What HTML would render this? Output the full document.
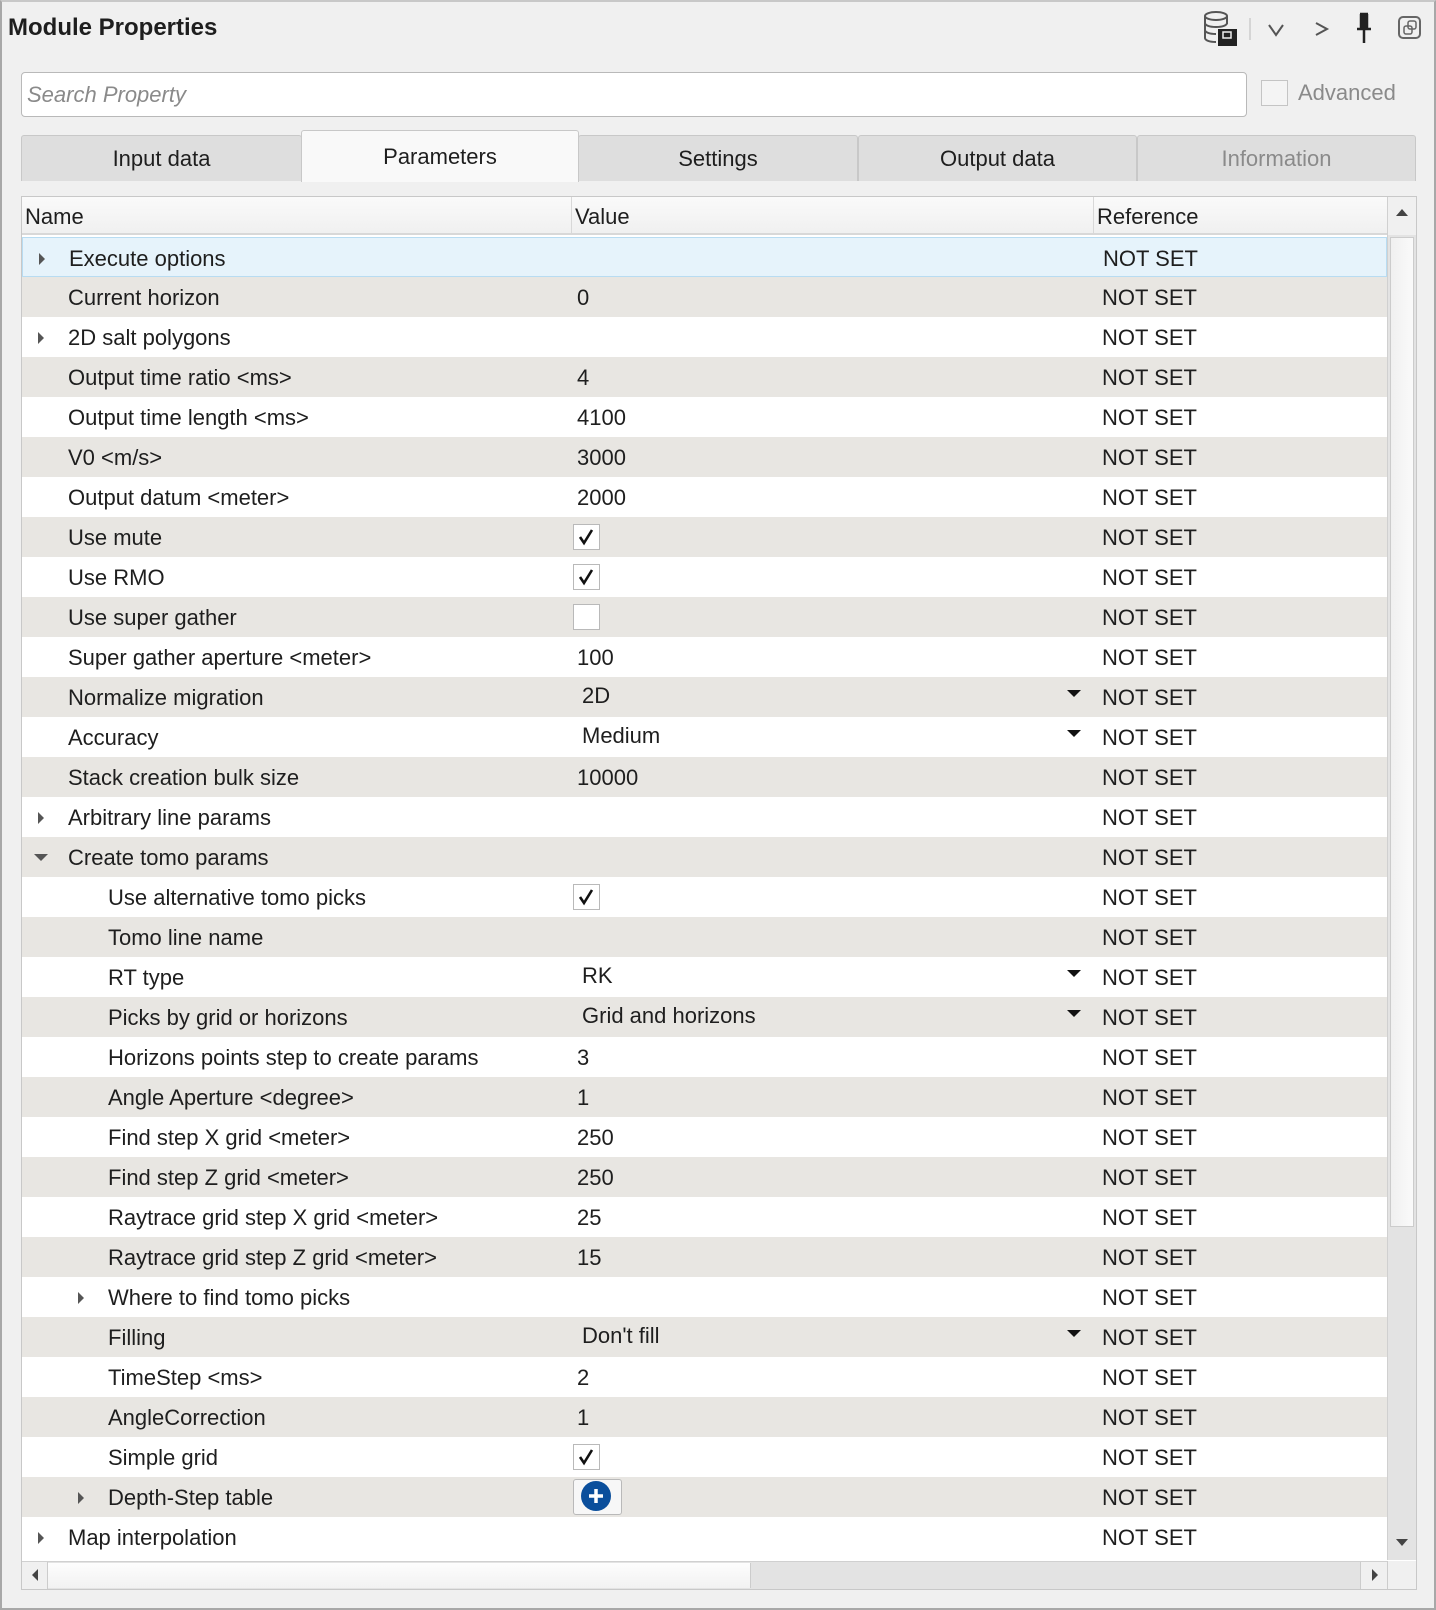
<!DOCTYPE html>
<html><head><meta charset="utf-8"><style>
*{box-sizing:border-box;margin:0;padding:0}
body{width:1436px;height:1610px;background:#f0f0f0;font-family:"Liberation Sans",sans-serif;color:#1e1e1e;position:relative;overflow:hidden}
.frame{position:absolute;left:0;top:0;width:1436px;height:1610px;border:2px solid #a8a8a8;border-top-color:#c8c8c8}
.abs{position:absolute}
.title{left:8px;top:14px;font-size:24px;font-weight:bold;letter-spacing:0px}
.search{left:21px;top:72px;width:1226px;height:45px;background:#fff;border:1.5px solid #b9b9b9;border-radius:4px;font-style:italic;color:#8a8a8a;font-size:22px;padding:9px 5px}
.adv{left:1261px;top:80px;width:27px;height:26px;border:1.5px solid #c4c4c4;background:#f4f4f4}
.advt{left:1298px;top:80px;font-size:22px;color:#8a8a8a}
.tab{top:135px;height:46px;background:#dedede;border:1px solid #c8c8c8;border-bottom:none;border-radius:3px 3px 0 0;font-size:22px;text-align:center;padding-top:10px}
.tab.act{top:130px;height:52px;background:#f9f9f9;padding-top:13px}
.table{left:21px;top:196px;width:1396px;height:1394px;border:1px solid #c8c8c8;background:#fff}
.hdr{left:22px;top:197px;width:1365px;height:38px;background:linear-gradient(#fafafa,#f0f0f0);border-bottom:2px solid #d8d8d8;font-size:22px}
.hdr span{position:absolute;top:7px}
.hdr i{position:absolute;top:0;width:1px;height:38px;background:#d8d8d8}
.row{position:absolute;left:22px;width:1365px;height:40px;font-size:22px}
.row.g{background:#e8e6e2}
.row.sel{background:#e6f3fb;border:1px solid #b8dcf2}
.row span{position:absolute;top:8px;white-space:nowrap}
.arr{position:absolute;top:15px;width:0;height:0;border-top:6px solid transparent;border-bottom:6px solid transparent;border-left:6px solid #555}
.arrd{position:absolute;top:17px;width:0;height:0;border-left:7px solid transparent;border-right:7px solid transparent;border-top:7px solid #555}
.cb{position:absolute;left:551px;top:7px;width:27px;height:26px;border:1.5px solid #b9b9b9;background:#fff}
.dd{position:absolute;left:1045px;top:13px;width:0;height:0;border-left:7px solid transparent;border-right:7px solid transparent;border-top:7px solid #111}
.vs{left:1387px;top:197px;width:29px;height:1363px;background:#e3e3e3;border-left:1px solid #d0d0d0}
.hs{left:22px;top:1561px;width:1365px;height:28px;background:#e3e3e3;border-top:1px solid #d0d0d0}
</style></head><body>
<div class="frame"></div>
<div class="abs title">Module Properties</div>
<svg class="abs" style="left:1200px;top:8px" width="230" height="40" viewBox="0 0 230 40">
<g fill="none" stroke="#555" stroke-width="2"><ellipse cx="16" cy="8" rx="11" ry="4"/><path d="M5 8v22c0 2.5 5 4 11 4M27 8v8M5 15c0 2.5 5 4 11 4s11-1.5 11-4M5 22c0 2.5 5 4 11 4"/></g>
<rect x="18" y="21" width="19" height="17" fill="#222"/><rect x="23" y="24" width="8" height="6" fill="none" stroke="#eee" stroke-width="1.5"/>
<line x1="50" y1="10" x2="50" y2="32" stroke="#ccc" stroke-width="1.5"/>
<path d="M69 17l7 10 7-10" fill="none" stroke="#555" stroke-width="2"/>
<path d="M116 15l11 6-11 6" fill="none" stroke="#555" stroke-width="2"/>
<path d="M160 6h8M161 6v14h6V6M157 21h14M164 21v14" fill="#222" stroke="#222" stroke-width="2.5"/>
<rect x="199" y="9" width="21" height="21" rx="4" fill="none" stroke="#666" stroke-width="2"/><rect x="204" y="18" width="8" height="8" rx="2" fill="none" stroke="#666" stroke-width="1.5"/><rect x="208" y="13" width="8" height="8" rx="2" fill="none" stroke="#666" stroke-width="1.5"/>
</svg>
<div class="abs search">Search Property</div>
<div class="abs adv"></div><div class="abs advt">Advanced</div>
<div class="abs tab" style="left:21px;width:281px">Input data</div>
<div class="abs tab" style="left:578px;width:280px">Settings</div>
<div class="abs tab" style="left:858px;width:279px">Output data</div>
<div class="abs tab" style="left:1137px;width:279px;color:#8a8a8a">Information</div>
<div class="abs tab act" style="left:301px;width:278px">Parameters</div>
<div class="abs table"></div>
<div class="abs hdr"><span style="left:3px">Name</span><i style="left:549px"></i><span style="left:553px">Value</span><i style="left:1071px"></i><span style="left:1075px">Reference</span></div>
<div id="rows"></div>
<div class="abs vs"><div style="position:absolute;left:0;top:0;width:28px;height:38px;background:#f0f0f0"></div><div style="position:absolute;left:8px;top:12px;border-left:6px solid transparent;border-right:6px solid transparent;border-bottom:7px solid #444"></div><div style="position:absolute;left:2px;top:40px;width:24px;height:990px;background:linear-gradient(90deg,#f0f0f0,#fafafa);border:1px solid #ccc"></div><div style="position:absolute;left:8px;top:1342px;border-left:6px solid transparent;border-right:6px solid transparent;border-top:7px solid #444"></div></div>
<div class="abs hs"><div style="position:absolute;left:0;top:0;width:26px;height:27px;background:#f0f0f0;border-right:1px solid #ccc"></div><div style="position:absolute;left:10px;top:7px;border-top:6px solid transparent;border-bottom:6px solid transparent;border-right:6px solid #444"></div><div style="position:absolute;left:26px;top:1px;width:703px;height:25px;background:linear-gradient(#fdfdfd,#f2f2f2);border-right:1px solid #ccc"></div><div style="position:absolute;left:1338px;top:0;width:27px;height:27px;background:#f0f0f0;border-left:1px solid #ccc"></div><div style="position:absolute;left:1350px;top:7px;border-top:6px solid transparent;border-bottom:6px solid transparent;border-left:6px solid #444"></div></div>
<div class="abs" style="left:1387px;top:1561px;width:29px;height:28px;background:#f0f0f0;border-left:1px solid #ccc"></div>
<script>
var R=[
[0,'r','Execute options',''],[0,'','Current horizon','0'],[0,'r','2D salt polygons',''],[0,'','Output time ratio <ms>','4'],
[0,'','Output time length <ms>','4100'],[0,'','V0 <m/s>','3000'],[0,'','Output datum <meter>','2000'],[0,'','Use mute','#c'],
[0,'','Use RMO','#c'],[0,'','Use super gather','#e'],[0,'','Super gather aperture <meter>','100'],[0,'','Normalize migration','#d2D'],
[0,'','Accuracy','#dMedium'],[0,'','Stack creation bulk size','10000'],[0,'r','Arbitrary line params',''],[0,'d','Create tomo params',''],
[1,'','Use alternative tomo picks','#c'],[1,'','Tomo line name',''],[1,'','RT type','#dRK'],[1,'','Picks by grid or horizons','#dGrid and horizons'],
[1,'','Horizons points step to create params','3'],[1,'','Angle Aperture <degree>','1'],[1,'','Find step X grid <meter>','250'],[1,'','Find step Z grid <meter>','250'],
[1,'','Raytrace grid step X grid <meter>','25'],[1,'','Raytrace grid step Z grid <meter>','15'],[1,'r','Where to find tomo picks',''],[1,'','Filling',"#dDon't fill"],
[1,'','TimeStep <ms>','2'],[1,'','AngleCorrection','1'],[1,'','Simple grid','#c'],[1,'r','Depth-Step table','#p'],[0,'r','Map interpolation','']];
var h='';function esc(s){return s.replace(/&/g,'&amp;').replace(/</g,'&lt;').replace(/>/g,'&gt;')}
R.forEach(function(r,i){var y=237+i*40;var cls=i==0?'row sel':(i%2?'row g':'row');
var ind=r[0]?40:0;var s='<div class="'+cls+'" style="top:'+y+'px">';
if(r[1]=='r')s+='<div class="arr" style="left:'+(16+ind)+'px"></div>';
if(r[1]=='d')s+='<div class="arrd" style="left:'+(12+ind)+'px"></div>';
s+='<span style="left:'+(46+ind)+'px">'+esc(r[2])+'</span>';
var v=r[3];
if(v=='#c')s+='<div class="cb"><svg width="24" height="23" viewBox="0 0 24 23"><path d="M6 12l4 6 8-13" fill="none" stroke="#111" stroke-width="2.6"/></svg></div>';
else if(v=='#e')s+='<div class="cb"></div>';
else if(v=='#p')s+='<div class="cb" style="width:49px;height:36px;top:2px;border-radius:3px;background:#f7f7f7"><svg width="46" height="33" viewBox="0 0 46 33"><circle cx="22" cy="16" r="15" fill="#0b4f9c"/><path d="M22 9v14M15 16h14" stroke="#fff" stroke-width="3.5"/></svg></div>';
else if(v.indexOf('#d')==0)s+='<span style="left:560px;top:6px">'+esc(v.slice(2))+'</span><div class="dd"></div>';
else if(v)s+='<span style="left:555px">'+esc(v)+'</span>';
s+='<span style="left:1080px">NOT SET</span></div>';h+=s;});
document.getElementById('rows').innerHTML=h;
</script>
</body></html>
